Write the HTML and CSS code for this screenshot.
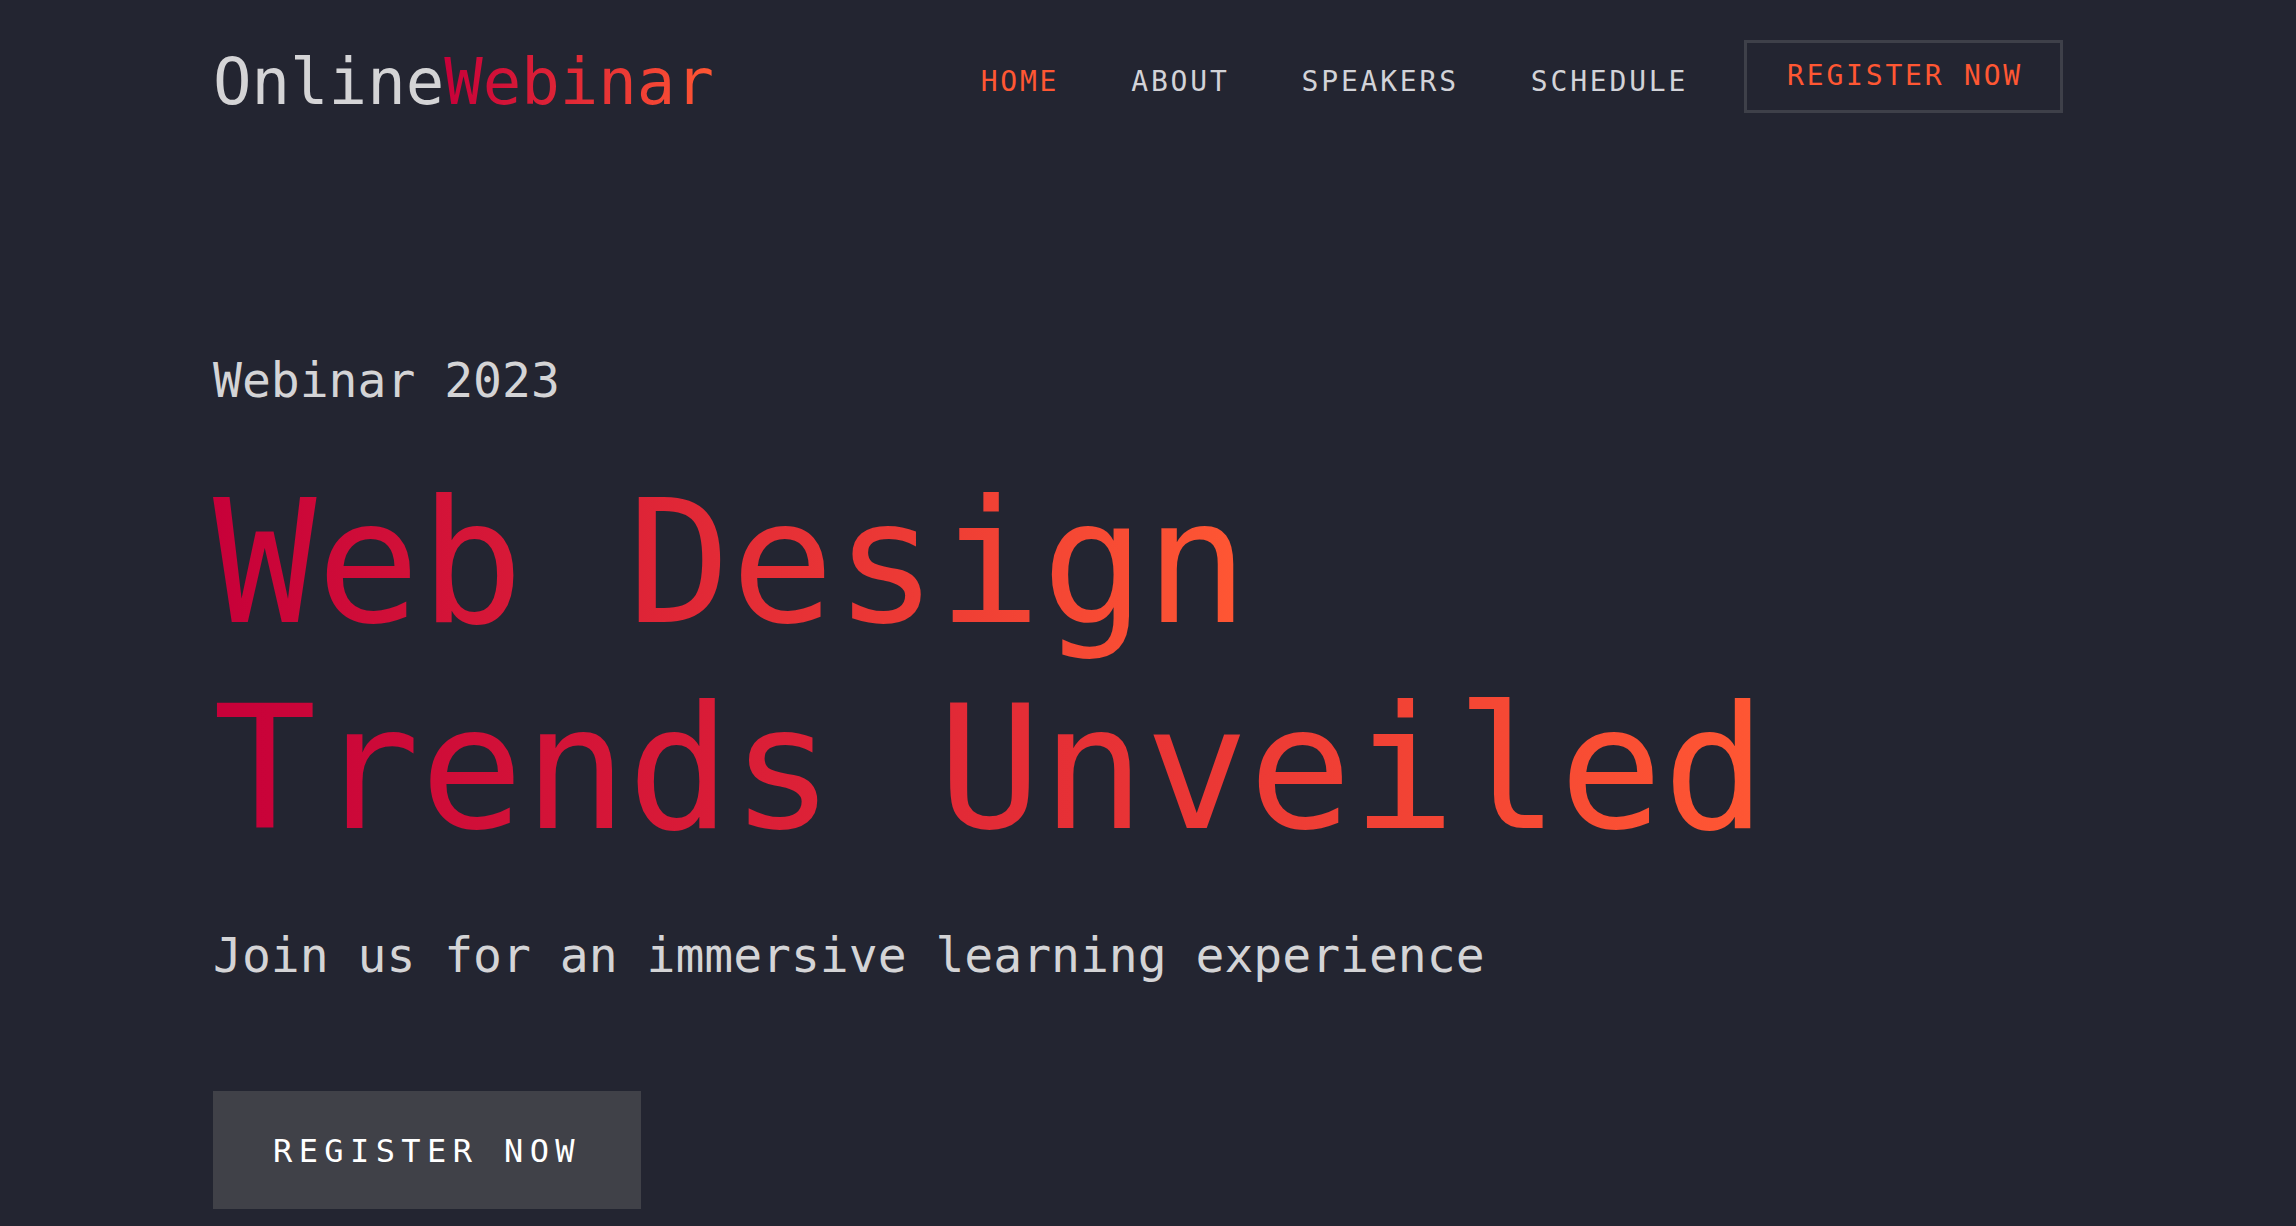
FILE: index.html
```html
<!DOCTYPE html>
<html lang="en">
<head>
<meta charset="utf-8">
<title>OnlineWebinar</title>
<link rel="stylesheet" href="styles.css">
</head>
<body>
<div class="page">
  <header class="header">
    <a class="logo" href="#">Online<span class="grad">Webinar</span></a>
    <nav class="nav">
      <ul class="nav-links">
        <li><a class="nav-link active" href="#">HOME</a></li>
        <li><a class="nav-link" href="#">ABOUT</a></li>
        <li><a class="nav-link" href="#">SPEAKERS</a></li>
        <li><a class="nav-link" href="#">SCHEDULE</a></li>
      </ul>
      <a class="nav-btn" href="#">REGISTER NOW</a>
    </nav>
  </header>
  <main class="hero">
    <p class="eyebrow">Webinar 2023</p>
    <h1 class="title"><span class="grad line">Web Design</span><span class="grad line">Trends Unveiled</span></h1>
    <p class="lead">Join us for an immersive learning experience</p>
    <a class="cta" href="#">REGISTER NOW</a>
  </main>
</div>
</body>
</html>
```

FILE: styles.css
```css
* { box-sizing: border-box; }
html, body { margin: 0; padding: 0; }
body {
  background: #232531;
  color: #d4d4d6;
  font-family: "DejaVu Sans Mono", "Liberation Mono", monospace;
  height: 1226px;
  overflow: hidden;
}
a { text-decoration: none; }
.page {
  padding: 0 233px 0 213px;
}
.grad {
  background: linear-gradient(90deg, #c70039, #ff5733);
  -webkit-background-clip: text;
  background-clip: text;
  color: transparent;
}
.header {
  display: flex;
  justify-content: space-between;
  align-items: flex-start;
  padding-top: 40px;
}
.logo {
  margin-top: 10px;
  font-size: 64px;
  line-height: 1;
  color: #d4d4d6;
}
.nav {
  display: flex;
  align-items: flex-start;
}
.nav-links {
  display: flex;
  gap: 72px;
  list-style: none;
  margin: 28px 56px 0 0;
  padding: 0;
}
.nav-link {
  display: block;
  font-size: 28px;
  line-height: 28px;
  letter-spacing: 0.1em;
  color: #d2d3d8;
}
.nav-link.active { color: #ff5733; }
.nav-btn {
  display: block;
  font-size: 28px;
  line-height: 28px;
  letter-spacing: 0.1em;
  color: #ff5733;
  border: 3px solid #3e4049;
  padding: 19px 37px 20px 40px;
}
.hero {
  padding-top: 238px;
}
.eyebrow {
  margin: 0;
  font-size: 48px;
  line-height: 57.6px;
  color: #d4d4d6;
}
.title {
  margin: 50px 0 0;
  font-weight: normal;
  font-size: 172px;
  line-height: 206.4px;
}
.line {
  display: block;
  width: fit-content;
}
.lead {
  margin: 55px 0 0;
  font-size: 48px;
  line-height: 57.6px;
  color: #d4d4d6;
}
.cta {
  display: inline-block;
  margin-top: 106px;
  background: #404148;
  color: #ffffff;
  font-size: 32px;
  line-height: 38px;
  letter-spacing: 0.2em;
  padding: 41px 60px 39px 60px;
}
```
